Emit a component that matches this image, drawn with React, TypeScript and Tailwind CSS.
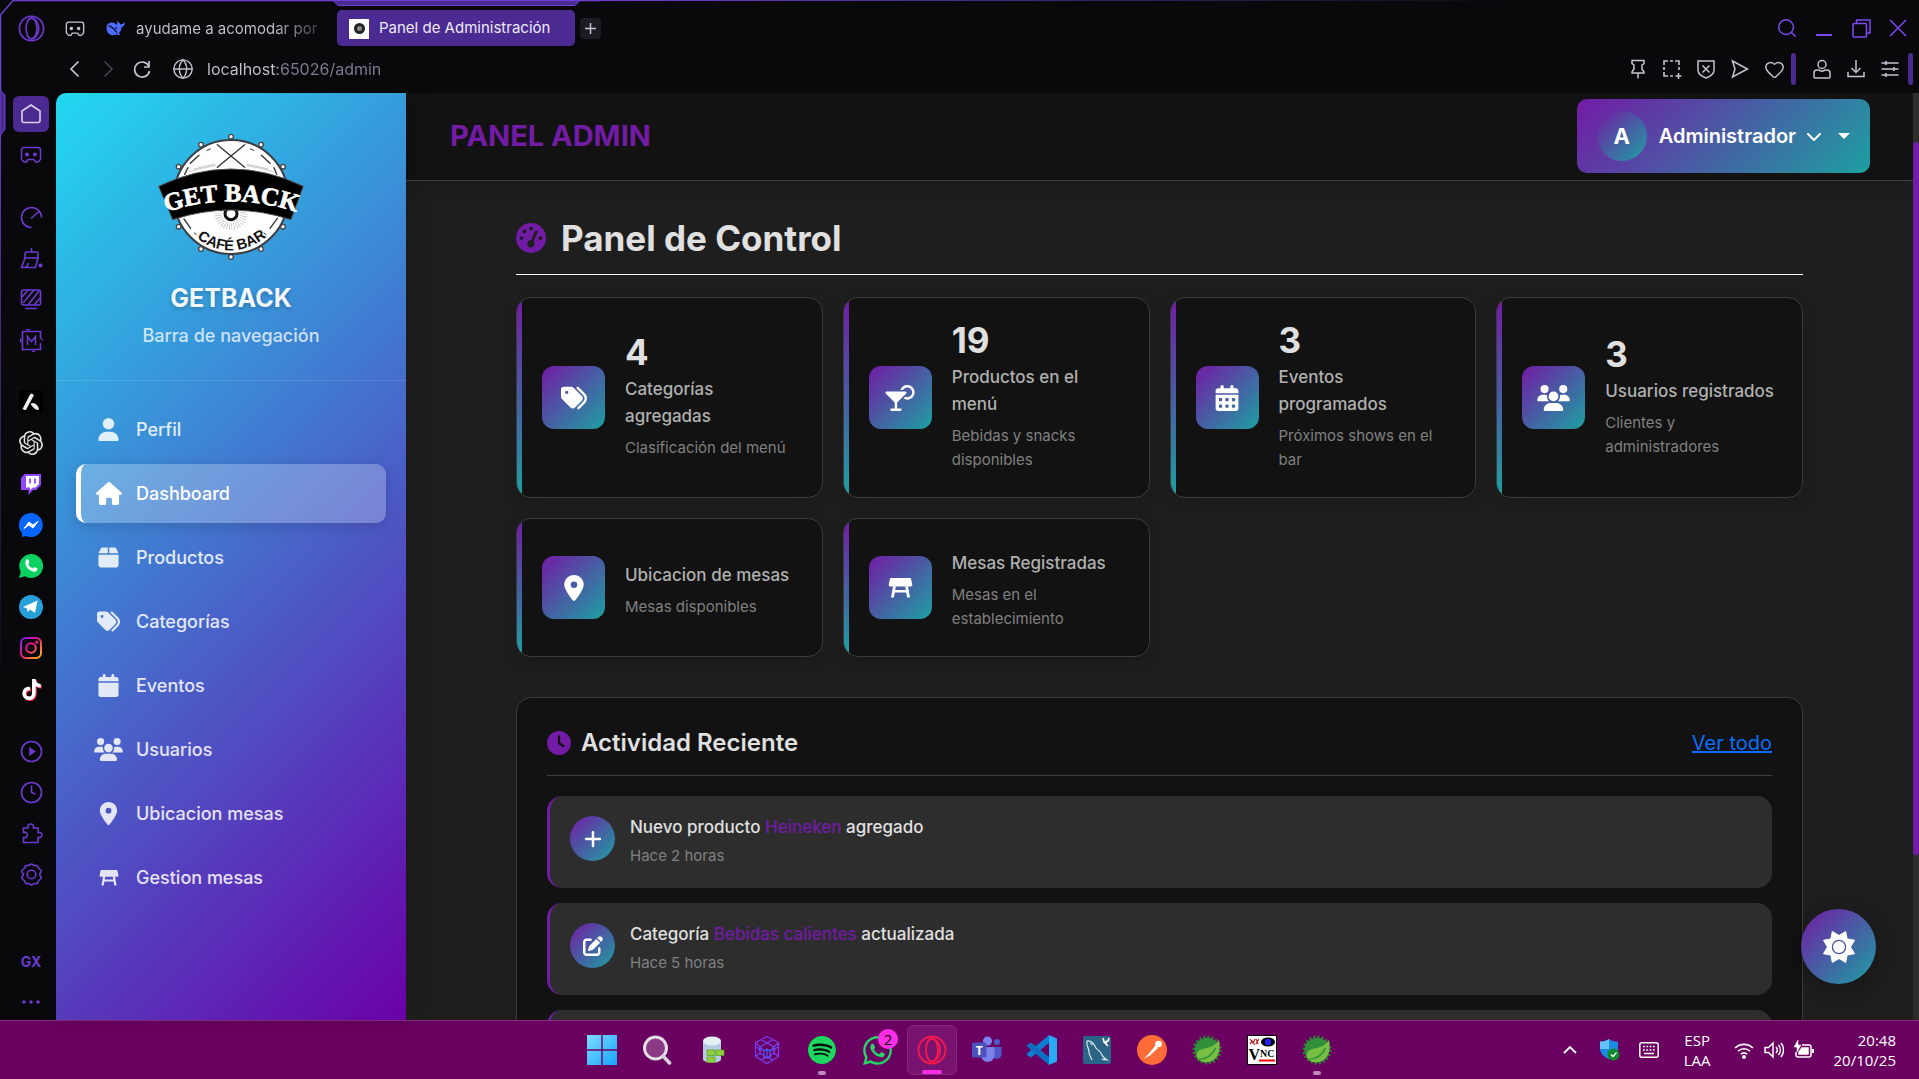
import type { ReactNode } from "react";
import {
  FaBox,
  FaCalendar,
  FaCalendarDays,
  FaChevronDown,
  FaClock,
  FaGaugeHigh,
  FaHouse,
  FaLocationDot,
  FaMartiniGlassCitrus,
  FaPenToSquare,
  FaPlus,
  FaTags,
  FaTiktok,
  FaUser,
  FaUsers,
  FaWhatsapp,
} from "react-icons/fa6";
import { SiOpenai, SiSpotify } from "react-icons/si";
import { Globe, Heart, Search } from "lucide-react";

/* ---------- Drawings ---------- */

function OperaRing({ className }: { className?: string }) {
  return (
    <svg viewBox="0 0 28 28" fill="none" stroke="currentColor" strokeWidth="1.8" className={className}>
      <circle cx="14" cy="14" r="12.6" />
      <ellipse cx="14" cy="14" rx="5.6" ry="10.8" />
      <path d="M14 3.2c3.6.4 7.600 4.600 7.600 10.800S17.600 24.400 14 24.800" />
    </svg>
  );
}

function PicnicTable({ className }: { className?: string }) {
  return (
    <svg viewBox="0 0 20 16" fill="currentColor" className={className}>
      <path d="M2.600 0h14.800c.6 0 1 .3 1.100.8l.9 4.600c.1.8-.4 1.400-1.200 1.400H1.800C1 6.800.5 6.200.6 5.400l.9-4.600C1.600.3 2 0 2.600 0z" />
      <path d="M4 6.500h2.200l-.4 3h8.400l-.4-3H16L17.600 15.500h-2.300l-.7-4H5.400l-.7 4H2.400z" />
    </svg>
  );
}

function Gamepad({ className }: { className?: string }) {
  return (
    <svg viewBox="0 0 22 18" fill="none" stroke="currentColor" strokeWidth="1.500" className={className}>
      <path d="M4 1.500h14a2.500 2.500 0 0 1 2.500 2.500v9.500L18 16h-2.500l-1.500-2.500H8L6.500 16H4l-2.500-2.500V4A2.500 2.500 0 0 1 4 1.500z" />
      <circle cx="7" cy="8.500" r="1.200" fill="currentColor" />
      <circle cx="15" cy="8.500" r="1.200" fill="currentColor" />
    </svg>
  );
}

function Leaf({ className }: { className?: string }) {
  return (
    <svg viewBox="0 0 32 32" className={className}>
      <circle cx="16" cy="16" r="14" fill="none" stroke="#2f7d33" strokeWidth="3" strokeDasharray="2.200 2.200" />
      <circle cx="16" cy="16" r="13.200" fill="#2f8f3a" />
      <path d="M28.500 5c2.500 9 .5 19-8 23C13 31 5.500 28 5 22.500c-.4-5 3.500-7.500 9.500-8.500 6-1 10.500-3 14-9z" fill="#76bf43" />
      <path d="M7 26c8-.5 14.500-4 18-12" fill="none" stroke="#2f8f3a" strokeWidth="1.500" />
    </svg>
  );
}

function Logo() {
  const nubs = [
    [525, 143], [435, 167], [615, 167], [368, 233], [681, 233],
    [368, 413], [681, 413], [435, 480], [615, 480], [525, 504],
  ];
  return (
    <svg viewBox="300 132 450 384" className="h-32 w-[150px]" role="img" aria-label="Get Back Café Bar">
      <defs>
        <path id="banner-line" d="M330 370Q525 304 722 370" />
        <path id="cafe-line" d="M418 444Q525 526 636 440" />
      </defs>
      {nubs.map(([x, y]) => (
        <circle key={`${x}-${y}`} cx={x} cy={y} r="7" fill="#fff" stroke="#444" strokeWidth="4" />
      ))}
      <circle cx="525" cy="324" r="171" fill="#fff" stroke="#3b3f44" strokeWidth="6" />
      <g fill="none" stroke="#333" strokeLinecap="round">
        <path d="M484 167l82 68M566 167l-82 68" strokeWidth="4" />
        <path d="M403 223l26-24M386 256l10-20M616 199l26 24M654 236l8 20M384 390l20 28M664 388l-22 30" strokeWidth="4" />
        <path d="M453 184l10-4M583 180l10 4M415 432l6 5M630 437l-6-5" strokeWidth="3" />
        <path d="M400 248q40-12 78-18M414 240q34-10 62-14M572 230q40 6 78 18M574 226q34 6 62 14" stroke="#aaa" strokeWidth="2" />
      </g>
      <circle cx="525" cy="374" r="38" fill="none" stroke="#bbb" strokeWidth="22" strokeDasharray="2 5" />
      <circle cx="525" cy="374" r="18" fill="#fff" stroke="#111" strokeWidth="9" />
      <path d="M308 292Q525 188 742 292L705 392Q525 334 350 392z" fill="#000" stroke="#555" strokeWidth="3" />
      <text fill="#fff" stroke="#fff" strokeWidth="2" fontSize="76" fontWeight="700" fontFamily="'Liberation Serif',serif" textAnchor="middle">
        <textPath href="#banner-line" startOffset="50%">GET BACK</textPath>
      </text>
      <text fill="#111" fontSize="44" fontWeight="700" fontFamily="'Liberation Sans',sans-serif" textAnchor="middle">
        <textPath href="#cafe-line" startOffset="50%">CAFÉ BAR</textPath>
      </text>
    </svg>
  );
}

function Line({ children, box = 24, className, w = 1.600 }: { children: ReactNode; box?: number; className?: string; w?: number }) {
  return (
    <svg viewBox={`0 0 ${box} ${box}`} fill="none" stroke="currentColor" strokeWidth={w} className={className}>
      {children}
    </svg>
  );
}

/* ---------- Browser chrome ---------- */

function ChromeButton({ label, children }: { label: string; children: ReactNode }) {
  return (
    <button aria-label={label} className="flex h-8 w-[22px] items-center justify-center">
      {children}
    </button>
  );
}

function BrowserTop() {
  return (
    <header className="relative h-[93px] shrink-0 bg-[#09090b] text-[#c4c4d0]">
      <svg viewBox="0 0 600 93" className="pointer-events-none absolute left-0 top-0 h-[93px] w-[600px]" fill="none">
        <path d="M.5 93V15L13 .500H600" stroke="#6d3fd4" strokeWidth="1.500" />
        <path d="M333 .500l5 5H575l5-5z" fill="#4b2a92" stroke="#6d3fd4" />
      </svg>
      <div className="absolute left-[600px] right-0 top-0 h-px bg-linear-to-r from-[#6d3fd4] to-transparent to-70%" />
      <div className="flex h-[47px] items-end pl-[18px] pr-[10px]">
        <button aria-label="Menú de Opera" className="mb-[5px] text-[#6b37cc]">
          <OperaRing className="size-[27px]" />
        </button>
        <button aria-label="GX Corner" className="mb-[9px] ml-5">
          <Gamepad className="h-[18px] w-5" />
        </button>
        <button className="ml-5 flex h-9 w-[218px] items-center gap-[10px] text-left">
          <svg viewBox="0 0 22 20" className="h-[18px] w-[21px] shrink-0 text-[#4d6bfe]" fill="currentColor">
            <path d="M1 9C1 4.500 4.500 2 8.500 3c1.500.3 2.500 1.200 3.600 2.300C13 6 13.200 3 12.500 1.500c2 .6 3.200 1.800 3.800 3.500C18 5 19.800 4 21.500 2.500c0 3-1.300 5-3.800 5.500-.1 3-1.300 5-3 6.800.8.600 1.500 1 2.300 1.400-1.700.7-3.400.4-4.800-.3C6.500 19 1 15.500 1 9z" />
            <path d="M3.500 6.500c4 .5 5.500 3.500 9 7.500" stroke="#09090b" strokeWidth="1.300" fill="none" />
            <circle cx="11.800" cy="9" r="1" fill="#09090b" />
          </svg>
          <span className="bg-linear-to-r from-[#c4c4d0] from-75% to-[#44444c] bg-clip-text text-[15px] whitespace-nowrap text-transparent">
            ayudame a acomodar por
          </span>
        </button>
        <button className="mb-px ml-[14px] flex h-9 w-[238px] items-center gap-[10px] rounded-[5px] bg-[#4b2a92] pt-px pl-3 text-[15px] text-[#eeeaf8]">
          <span className="flex size-5 items-center justify-center bg-white">
            <span className="size-[11px] rounded-full border-3 border-[#222] bg-[#888]" />
          </span>
          Panel de Administración
        </button>
        <button aria-label="Nueva pestaña" className="mb-2 ml-[5px] flex h-[21px] w-[21px] items-center justify-center rounded bg-[#1b1b24]">
          <Line className="size-[15px]" box={15} w={1.500}><path d="M7.500 2v11M2 7.500h11" /></Line>
        </button>
        <div className="mb-[3px] ml-auto flex gap-[15px] text-[#7c4af0]">
          <ChromeButton label="Buscar"><Search className="size-[22px] shrink-0" strokeWidth={1.600} /></ChromeButton>
          <ChromeButton label="Minimizar"><Line className="size-4" box={16} w={2}><path d="M0 15h16" /></Line></ChromeButton>
          <ChromeButton label="Restaurar">
            <Line className="size-[19px] shrink-0" box={19} w={1.500}>
              <rect x="1" y="4.500" width="13.500" height="13.500" rx="1" /><path d="M4.500 4V1H18v13h-3" />
            </Line>
          </ChromeButton>
          <ChromeButton label="Cerrar"><Line className="size-[18px]" box={18} w={1.500}><path d="M1 1l16 16M17 1L1 17" /></Line></ChromeButton>
        </div>
      </div>
      <div className="flex h-11 items-center pl-16">
        <ChromeButton label="Atrás"><Line className="h-[18px] w-[18px]" box={18} w={1.700}><path d="M12.500 1.500L5 9l7.500 7.500" /></Line></ChromeButton>
        <span className="w-[11px]" />
        <ChromeButton label="Adelante"><Line className="h-[18px] w-[18px] text-[#44444c]" box={18}><path d="M5.500 1.500L13 9l-7.500 7.500" /></Line></ChromeButton>
        <span className="w-3" />
        <ChromeButton label="Recargar"><Line className="size-[18px]" box={18} w={1.700}><path d="M16 1v6h-5M16 6.500A7.500 7.500 0 1 0 16.500 11" /></Line></ChromeButton>
        <span className="w-[19px]" />
        <Globe className="size-[22px]" strokeWidth={1.500} />
        <input
          aria-label="Dirección"
          defaultValue="localhost:65026/admin"
          className="ml-[13px] w-[400px] bg-[linear-gradient(90deg,#c4c4d0_70px,#7f7c93_70px)] bg-clip-text text-[16px] text-transparent outline-none"
        />
        <div className="ml-auto flex items-center gap-3 pr-[6px]">
          <ChromeButton label="Anclar"><Line className="size-5 shrink-0" box={20} w={1.500}><path d="M4 1.500h12v3l-2 1.500v4l2 3v1H4v-1l2-3V6L4 4.500zM10 14v5.500" /></Line></ChromeButton>
          <ChromeButton label="Captura">
            <Line className="size-5 shrink-0" box={20} w={1.600}>
              <path d="M2 6V2h4M8 2h3M13 2h4v4M2 8v3M2 13v4h4M8 17h3M17 8v3M16.500 14v6M13.500 17h6" />
            </Line>
          </ChromeButton>
          <ChromeButton label="Bloqueador">
            <Line className="size-5 shrink-0" box={20} w={1.500}><path d="M2 2h16v9c0 4-4 6.500-8 8-4-1.500-8-4-8-8zM6.500 6.500l7 7M13.500 6.500l-7 7" /></Line>
          </ChromeButton>
          <ChromeButton label="Enviar"><Line className="size-5 shrink-0" box={20} w={1.500}><path d="M2.500 2l15 8-15 8 2.500-8z" /></Line></ChromeButton>
          <ChromeButton label="Favoritos"><Heart className="size-[21px] shrink-0" strokeWidth={1.600} /></ChromeButton>
          <span className="-ml-[6px] mr-[3px] h-8 w-[5px] rounded-sm bg-[#4b2a92]" />
          <ChromeButton label="Perfil del navegador">
            <Line className="size-5 shrink-0" box={20} w={1.500}><circle cx="10" cy="5.500" r="4" /><path d="M5 11h2c1 1.500 5 1.500 6 0h2a3 3 0 0 1 3 3v4a1 1 0 0 1-1 1H3a1 1 0 0 1-1-1v-4a3 3 0 0 1 3-3z" /></Line>
          </ChromeButton>
          <ChromeButton label="Descargas"><Line className="size-5 shrink-0" box={20} w={1.500}><path d="M10 1v12M5.500 9l4.500 4.500L14.500 9M2 13v4.500h16V13" /></Line></ChromeButton>
          <ChromeButton label="Configuración rápida">
            <Line className="size-5 shrink-0" box={20} w={1.600}><path d="M1.500 4h17M1.500 10h17M1.500 16h17M6 2v4M14 8v4M6 14v4" /></Line>
          </ChromeButton>
          <span className="-ml-[5px] h-8 w-[5px] rounded-sm bg-[#4b2a92]" />
        </div>
      </div>
    </header>
  );
}

const railGroups: { label: string; icon: ReactNode }[][] = [
  [
    { label: "Inicio", icon: <span className="flex size-9 items-center justify-center rounded-md bg-[#4b2a92] text-[#d8d4e4]"><Line className="size-[22px]" box={22}><path d="M11 2l9 6v9.500a2 2 0 0 1-2 2H4a2 2 0 0 1-2-2V8z" /></Line></span> },
    { label: "GX Corner", icon: <Gamepad className="h-[18px] w-[22px]" /> },
  ],
  [
    { label: "GX Control", icon: <Line className="size-[23px]" box={23}><path d="M11.500 21.500a10 10 0 1 1 10-10M11 12.500l8-7" /></Line> },
    { label: "GX Cleaner", icon: <Line className="size-[23px]" box={23}><path d="M11.500 1v4M5 11V7a2 2 0 0 1 2-2h9a2 2 0 0 1 2 2v4zM5 11L1.500 20.500H15.500L18 11M6 20c1.500-1 2-2 2.500-4" /><circle cx="20.500" cy="18.500" r="1.300" fill="currentColor" /></Line> },
    { label: "Fondos", icon: <Line className="size-[22px]" box={22}><rect x="1.500" y="2" width="19" height="15" rx="2" /><path d="M2 9l6-7M3 15L14 2M8 17L19 3M14 17l6-7M5 20.500h12" /></Line> },
    { label: "GX Mods", icon: <Line className="size-[23px]" box={23}><path d="M20.500 14v6.500h-18v-18h18V10M.500 9.500v4M22.500 9.500v2M6 .500h4M12 22.500h3M7.500 16V7.500l4 5 4-5V16" /></Line> },
  ],
  [
    { label: "Aria", icon: <svg viewBox="0 0 24 24" className="size-6"><rect width="24" height="24" rx="4" fill="#000" /><path d="M3.500 19L11 4.500c.5-1 1.500-1 2.500-.5l1.500 1L7.500 19c-.5 1-1 1.300-2 1zM11.500 14c3-3 8 1 8.500 5.500-2 1.500-5-.500-8.500-5.500z" fill="#eee" /></svg> },
    { label: "ChatGPT", icon: <SiOpenai className="size-6 text-[#e5e5e5]" /> },
    { label: "Twitch", icon: <svg viewBox="0 0 20 21" className="h-[21px] w-5"><path d="M3.500 0H20v11l-5 5h-3l-4.500 5v-5H0V4z" fill="#9146ff" /><path d="M5 2h13v8l-3.500 3.500H12L9 16v-2.500H5z" fill="#fff" /><path d="M9 4.500v5M14 4.500v5" stroke="#9146ff" strokeWidth="1.800" /></svg> },
    { label: "Messenger", icon: <svg viewBox="0 0 24 24" className="size-6"><path d="M12 0a12 12 0 1 1-5 23l-4 1v-4A12 12 0 0 1 12 0z" fill="#0866ff" /><path d="M5 15.500l5-6.500 4 3 5-3.500-5 6.500-4-3z" fill="#fff" stroke="#fff" strokeLinejoin="round" /></svg> },
    { label: "WhatsApp", icon: <svg viewBox="0 0 24 24" className="size-6"><path d="M12 0a12 12 0 1 1-6 22.300L0 24l1.800-6A12 12 0 0 1 12 0z" fill="#09d261" /><path d="M7.500 5.500c1-.8 2-.3 2.500 1.500.6 1.500.3 2-.8 3 1 2.200 2.500 3.500 4.800 4.600 1-1.300 1.500-1.600 3-.9 1.700.8 2 1.500 1 2.800-2 2.300-5.500 1-8.500-1.500S5.300 7.800 7.500 5.500z" fill="#fff" /></svg> },
    { label: "Telegram", icon: <svg viewBox="0 0 24 24" className="size-6"><circle cx="12" cy="12" r="12" fill="#279fd9" /><path d="M4 12l14.500-6.500L16 18l-5-3.500L8.500 17 8 13.500z" fill="#fff" /></svg> },
    { label: "Instagram", icon: (
      <svg viewBox="0 0 22 22" className="size-[22px]" fill="none" stroke="url(#insta)" strokeWidth="2">
        <defs><linearGradient id="insta" gradientUnits="userSpaceOnUse" x1="0" y1="0" x2="22" y2="22"><stop stopColor="#6a20ff" /><stop offset=".45" stopColor="#f0128a" /><stop offset="1" stopColor="#ffd400" /></linearGradient></defs>
        <rect x="1" y="1" width="20" height="20" rx="5" /><circle cx="11" cy="11" r="4.800" /><circle cx="16.800" cy="5.200" r=".6" />
      </svg>
    ) },
    { label: "TikTok", icon: <FaTiktok className="size-[21px] text-white drop-shadow-[1px_1px_0_#fe2c55]" /> },
  ],
  [
    { label: "Reproductor", icon: <Line className="size-[23px]" box={23}><circle cx="11.500" cy="11.500" r="10" /><path d="M10 8.500l4.500 3-4.500 3z" fill="currentColor" /></Line> },
    { label: "Historial", icon: <Line className="size-[23px]" box={23}><circle cx="11.500" cy="11.500" r="10" /><path d="M11.500 4.500v7l4 1.500" /></Line> },
    { label: "Extensiones", icon: <Line className="size-[23px]" box={23}><path d="M3.500 6h4.500c-.6-2.500.6-4 2.700-4s3.300 1.500 2.700 4h4.600v4.500c2.500-.6 4 .6 4 2.500s-1.500 3.100-4 2.500V20.500H3.500v-5c2.600.6 3.800-.7 3.800-2.500S6.100 10 3.500 10.500z" /></Line> },
    { label: "Ajustes", icon: <Line className="size-[23px]" box={23}><path d="M8 2.500c1.500.5 2-1.500 3.500-1.500s2 2 3.500 1.500 3 .5 3.200 2.200c.2 1.500 2.500 1.300 3 3 .4 1.500-1.500 2.300-1.500 3.800s1.900 2.300 1.500 3.800c-.5 1.700-2.800 1.500-3 3-.2 1.700-1.700 2.700-3.200 2.200S13 22 11.500 22s-2-2-3.500-1.500-3-.5-3.200-2.200c-.2-1.500-2.500-1.300-3-3-.4-1.500 1.500-2.300 1.500-3.800S1.400 9.200 1.800 7.700c.5-1.700 2.800-1.500 3-3C5 3 6.500 2 8 2.500z" /><circle cx="11.500" cy="11.500" r="4.300" /></Line> },
  ],
  [
    { label: "GX", icon: <span className="text-[14px] font-bold">GX</span> },
    { label: "Más", icon: <svg viewBox="0 0 18 4" className="h-1 w-[18px]" fill="currentColor"><circle cx="2" cy="2" r="1.800" /><circle cx="9" cy="2" r="1.800" /><circle cx="16" cy="2" r="1.800" /></svg> },
  ],
];

function BrowserRail() {
  return (
    <aside className="relative flex w-14 shrink-0 flex-col gap-[26px] bg-[#09090b] pt-[3px] pl-[6px] text-[#6b3bd0]">
      <div className="absolute left-0 top-0 h-[600px] w-px bg-linear-to-b from-[#6d3fd4] to-transparent" />
      <svg viewBox="0 0 7 50" className="absolute left-0 -top-[3px] h-[50px] w-[7px]">
        <path d="M0 0l5 5v34l-5 7z" fill="#4b2a92" stroke="#6d3fd4" />
      </svg>
      {railGroups.map((group, i) => (
        <div key={i} className="flex flex-col items-center gap-[5px] last:mt-auto">
          {group.map((item) => (
            <button key={item.label} aria-label={item.label} className="flex size-9 items-center justify-center">
              {item.icon}
            </button>
          ))}
        </div>
      ))}
    </aside>
  );
}

/* ---------- Admin panel ---------- */

const navItems = [
  { label: "Perfil", icon: <FaUser /> },
  { label: "Dashboard", icon: <FaHouse className="w-[26px]" />, active: true },
  { label: "Productos", icon: <FaBox /> },
  { label: "Categorías", icon: <FaTags /> },
  { label: "Eventos", icon: <FaCalendar /> },
  { label: "Usuarios", icon: <FaUsers className="w-[29px]" /> },
  { label: "Ubicacion mesas", icon: <FaLocationDot /> },
  { label: "Gestion mesas", icon: <PicnicTable className="h-4 w-5" /> },
];

function Sidebar() {
  return (
    <aside className="z-10 flex w-[350px] shrink-0 flex-col overflow-hidden rounded-tl-[10px] bg-[linear-gradient(135deg,#22d8f0,#6a00a8)] shadow-[4px_0_20px_rgba(0,0,0,0.15)]">
      <div className="flex flex-col items-center border-b border-white/10 pt-10 pb-[31px] text-center">
        <Logo />
        <h2 className="mt-5 text-[25px] leading-[34px] font-bold text-white/95 [text-shadow:0_2px_4px_rgba(0,0,0,0.2)]">GETBACK</h2>
        <p className="mt-[7px] text-[18px] leading-[27px] font-medium text-white/75">Barra de navegación</p>
      </div>
      <nav className="flex flex-col gap-[5px] px-5 pt-[19px]">
        {navItems.map((item) => (
          <a
            key={item.label}
            href="#"
            className={
              item.active
                ? "flex h-[59px] items-center rounded-[10px] border-l-5 border-white bg-white/25 pl-[15px] text-white shadow-[0_4px_15px_rgba(0,0,0,0.15)]"
                : "flex h-[59px] items-center rounded-[10px] pl-5 text-white/85"
            }
          >
            <span className="flex w-[25px] shrink-0 justify-center text-[23px] [&>svg]:shrink-0">{item.icon}</span>
            <span className="ml-[15px] text-[18px] font-medium">{item.label}</span>
          </a>
        ))}
      </nav>
    </aside>
  );
}

const stats = [
  { value: "4", label: "Categorías agregadas", note: "Clasificación del menú", icon: <FaTags className="w-7" /> },
  { value: "19", label: "Productos en el menú", note: "Bebidas y snacks disponibles", icon: <FaMartiniGlassCitrus className="w-[30px]" /> },
  { value: "3", label: "Eventos programados", note: "Próximos shows en el bar", icon: <FaCalendarDays /> },
  { value: "3", label: "Usuarios registrados", note: "Clientes y administradores", icon: <FaUsers className="w-[33px]" /> },
  { value: "", label: "Ubicacion de mesas", note: "Mesas disponibles", icon: <FaLocationDot /> },
  { value: "", label: "Mesas Registradas", note: "Mesas en el establecimiento", icon: <PicnicTable className="h-5 w-[25px]" /> },
];

function StatCard({ value, label, note, icon }: (typeof stats)[number]) {
  return (
    <article className="relative flex items-center gap-5 overflow-hidden rounded-[15px] border border-[#3c3c3c] bg-[#121212] p-[25px] shadow-[0_4px_15px_rgba(0,0,0,0.15)]">
      <div className="absolute inset-y-0 left-0 w-[5px] bg-[linear-gradient(180deg,#721ba5,#1da0a2)]" />
      <div className="flex size-[63px] shrink-0 items-center justify-center rounded-xl bg-[linear-gradient(135deg,#721ba5,#1da0a2)] text-[26px] text-white">
        {icon}
      </div>
      <div className="min-w-0">
        {value && <h3 className="text-[35px] leading-[35px] font-bold text-[#e0e0e0]">{value}</h3>}
        <p className="mt-[6px] text-[17px] leading-[27px] font-medium text-[#b0b0b0]">{label}</p>
        <p className="mt-[6px] text-[15px] leading-6 text-[#808080]">{note}</p>
      </div>
    </article>
  );
}

const activity = [
  { before: "Nuevo producto", subject: "Heineken", after: "agregado", time: "Hace 2 horas", icon: <FaPlus /> },
  { before: "Categoría", subject: "Bebidas calientes", after: "actualizada", time: "Hace 5 horas", icon: <FaPenToSquare /> },
];

const activityRow = "flex min-h-[92px] gap-[15px] rounded-[15px] border-l-3 border-[#721ba5] bg-[#2d2d2d] p-5";

function AdminPage() {
  return (
    <main className="relative flex min-w-0 flex-1 flex-col overflow-hidden bg-[#1e1e1e]">
      <header className="flex h-22 shrink-0 items-center justify-between border-b border-[#404040] bg-[#121212] pr-[43px] pb-px pl-11 shadow-[0_2px_15px_rgba(0,0,0,0.2)]">
        <h1 className="text-[29px] font-bold text-[#721ba5]">PANEL ADMIN</h1>
        <button className="flex h-[74px] items-center rounded-[10px] bg-[linear-gradient(135deg,#721ba5,#1da0a2)] px-5 text-white">
          <span className="flex size-[50px] items-center justify-center rounded-full bg-[linear-gradient(135deg,#721ba5,#1da0a2)] text-[22px] font-bold">A</span>
          <span className="ml-3 text-[20px] font-semibold">Administrador</span>
          <FaChevronDown className="ml-[10px] size-4" />
          <svg viewBox="0 0 12 6" className="ml-4 h-[6px] w-3" fill="currentColor"><path d="M0 0h12L6 6z" /></svg>
        </button>
      </header>
      <div className="px-[110px] pt-[35px]">
        <h2 className="flex items-center gap-[15px] border-b border-white pb-[14px] text-[35px] leading-11 font-bold text-[#e0e0e0]">
          <FaGaugeHigh className="size-[30px] text-[#721ba5]" />
          Panel de Control
        </h2>
        <section className="mt-[22px] grid grid-cols-4 gap-5">
          {stats.map((s) => (
            <StatCard key={s.label} {...s} />
          ))}
        </section>
        <section className="mt-10 rounded-[15px] border border-[#3c3c3c] bg-[#121212] p-[30px]">
          <div className="flex items-center justify-between border-b border-[#3c3c3c] pb-[17px]">
            <h3 className="flex items-center gap-[10px] text-[24px] leading-[30px] font-semibold text-[#e0e0e0]">
              <FaClock className="size-6 text-[#721ba5]" />
              Actividad Reciente
            </h3>
            <a href="#" className="text-[20px] leading-[30px] text-[#0d6efd] underline">Ver todo</a>
          </div>
          <ul className="mt-5 flex flex-col gap-[15px]">
            {activity.map((a) => (
              <li key={a.subject} className={activityRow}>
                <span className="flex size-[45px] shrink-0 items-center justify-center rounded-full bg-[linear-gradient(135deg,#721ba5,#1da0a2)] text-[20px] text-white">
                  {a.icon}
                </span>
                <div>
                  <p className="text-[17px] leading-[22px] font-medium text-[#e0e0e0]">
                    {a.before} <strong className="font-medium text-[#721ba5]">{a.subject}</strong> {a.after}
                  </p>
                  <p className="mt-[6px] text-[15px] leading-6 text-[#808080]">{a.time}</p>
                </div>
              </li>
            ))}
            <li className={activityRow} />
          </ul>
        </section>
      </div>
      <button
        aria-label="Cambiar tema"
        className="absolute right-[37px] bottom-9 flex size-[75px] items-center justify-center rounded-full bg-[linear-gradient(135deg,#721ba5,#1da0a2)] text-white shadow-[0_5px_20px_rgba(0,0,0,0.3)]"
      >
        <svg viewBox="-16 -16 32 32" className="size-8">
          <path d="M-6.700-15.500L0-11.500 6.700-15.500 8.100-8.100 15.500-6.700 11.500 0 15.500 6.700 8.100 8.100 6.700 15.500 0 11.500-6.700 15.500-8.100 8.100-15.500 6.700-11.500 0-15.500-6.700-8.100-8.100z" fill="white" stroke="white" strokeLinejoin="round" />
          <circle r="6.600" fill="none" stroke="#4b55a5" strokeWidth="1.300" />
        </svg>
      </button>
    </main>
  );
}

/* ---------- Taskbar ---------- */

const apps: { label: string; icon: ReactNode; mark?: "dot" | "active"; badge?: string }[] = [
  { label: "Inicio de Windows", icon: (
    <svg viewBox="0 0 30 30" className="size-[30px]">
      <defs><linearGradient id="win" x1="0" y1="0" x2="1" y2="1"><stop stopColor="#7fdcff" /><stop offset="1" stopColor="#15a4fb" /></linearGradient></defs>
      <path d="M0 0h14.300v14.300H0zM15.700 0H30v14.300H15.700zM0 15.700h14.300V30H0zM15.700 15.700H30V30H15.700z" fill="url(#win)" />
    </svg>
  ) },
  { label: "Buscar en Windows", icon: <svg viewBox="0 0 30 30" className="size-[30px]"><circle cx="13.500" cy="13" r="11" fill="#8a3a86" stroke="#e4e0e6" strokeWidth="3" /><path d="M21 21l6.500 7" stroke="#d8d4da" strokeWidth="3.500" strokeLinecap="round" /></svg> },
  { label: "Base de datos", icon: (
    <svg viewBox="0 0 30 30" className="size-[30px]">
      <path d="M6 6v18c0 5 18 5 18 0V6z" fill="#b4cde0" /><ellipse cx="15" cy="6" rx="9" ry="4.500" fill="#e6f0f7" />
      <path d="M10 15h8v5.500h-8zM19 15h8v5.500h-8zM10 22h8v5.500h-8z" fill="#8fd03f" stroke="#5a9a20" strokeWidth=".7" />
    </svg>
  ) },
  { label: "Kubernetes", icon: (
    <svg viewBox="0 0 30 30" className="size-[30px]" fill="none" stroke="#7a3ff0" strokeWidth="1.200">
      <path d="M15 1.500l11.500 6v14L15 28.500l-11.500-7v-14zM3.500 7.500L8 12l7-4 7 4 4.500-4.500M3.500 21.500L8 18l7 5 7-5 4.500 3.500M3.500 12L8 14v5M26.500 12L22 14v5M9 4.500l6 3.500 6-3.500M9 25l6-3 6 3" />
      <path d="M8 12l4 4v8M22 12l-4 4v8M12 16l3-2 3 2M15 14v8" stroke="#4a5cf5" />
      <circle cx="8" cy="15" r="1" /><circle cx="22" cy="15" r="1" />
    </svg>
  ) },
  { label: "Spotify", mark: "dot", icon: <span className="flex size-7 items-center justify-center rounded-full bg-[#0b0b0b]"><SiSpotify className="size-7 text-[#1ed760]" /></span> },
  { label: "WhatsApp Desktop", badge: "2", icon: <FaWhatsapp className="size-[33px] text-[#25d366]" /> },
  { label: "Opera GX", mark: "active", icon: <OperaRing className="size-[30px] text-[#f0184c]" /> },
  { label: "Teams", icon: (
    <svg viewBox="0 0 30 30" className="size-[30px]">
      <circle cx="15.500" cy="6" r="4.500" fill="#7b83eb" /><circle cx="25" cy="7" r="3" fill="#5059c9" />
      <path d="M20 12h9.500v7a5 5 0 0 1-9.500 2z" fill="#5059c9" /><path d="M9 12h13.500v9a6.800 6.800 0 0 1-13.500 0z" fill="#7b83eb" />
      <rect y="7.500" width="14.500" height="15" rx="1.500" fill="#4b53bc" /><text x="7.200" y="19.500" textAnchor="middle" fontSize="12" fontWeight="700" fill="#fff">T</text>
    </svg>
  ) },
  { label: "Visual Studio Code", icon: (
    <svg viewBox="0 0 30 30" className="size-[30px]">
      <path d="M22 0v8L4 22.500 0 20v-1.500z" fill="#0a7fd0" /><path d="M0 11.500V10l4-2.500L22 22v8z" fill="#0a6fc0" /><path d="M22 0l8 3.500v23L22 30z" fill="#2aa9f5" />
    </svg>
  ) },
  { label: "MySQL Workbench", icon: (
    <svg viewBox="0 0 30 30" className="size-[30px]">
      <rect x="1" y="1" width="28" height="28" rx="2" fill="#2a6486" />
      <path d="M10 25c-1-3-3-5-3-8 0-4-3-7-2-11 4-1 7 3 9 7 2 3 5 3 6 7 .5 2 3 3 5 5-2-.5-4 0-5-1M8 8.500c1 0 1.500.5 2 1.500" fill="none" stroke="#dde9f0" strokeWidth="1.200" />
      <path d="M21 3l1 4 4 4M22 7l4-1 1-3M22 7l3 1" fill="none" stroke="#fff" strokeWidth="1.600" />
    </svg>
  ) },
  { label: "Postman", icon: <svg viewBox="0 0 30 30" className="size-[30px]"><circle cx="15" cy="15" r="15" fill="#ff6c37" /><path d="M6.500 24l5-5 7-8.500 2.500 2.500-8 7.500z" fill="#fff" /><circle cx="21.500" cy="9" r="3.300" fill="#fff" /></svg> },
  { label: "Spring Tools", icon: <Leaf className="size-[30px]" /> },
  { label: "VNC", icon: (
    <svg viewBox="0 0 30 30" className="size-[30px]">
      <rect x=".5" y=".5" width="29" height="29" fill="#fff" stroke="#000" />
      <path d="M3 4l3 4 2-4M3 9l2-3 3 4M9 4l2 5M12 4l-3 5" stroke="#b22" strokeWidth="1.200" fill="none" /><ellipse cx="21" cy="7" rx="7" ry="4.500" fill="#000" /><circle cx="21" cy="7" r="3.200" fill="#22f" />
      <text x="1.500" y="25" fontSize="16" fontWeight="700" fontFamily="'Liberation Serif',serif">V</text>
      <text x="13" y="22" fontSize="10" fontWeight="700" fontFamily="'Liberation Serif',serif">NC</text>
      <path d="M12 25.500h16" stroke="#f00" strokeWidth="2" />
    </svg>
  ) },
  { label: "Spring Boot", mark: "dot", icon: <Leaf className="size-[30px]" /> },
];

function Taskbar() {
  return (
    <footer className="grid h-[59px] shrink-0 grid-cols-[1fr_auto_1fr] items-center border-t border-[#853080] bg-[#6a005f] font-['Open_Sans',sans-serif] text-[15px] leading-5 text-white">
      <div className="col-start-2 flex gap-[5px]">
        {apps.map((app) => (
          <button
            key={app.label}
            aria-label={app.label}
            className={
              app.mark === "active"
                ? "relative flex size-[50px] items-center justify-center rounded-md border border-[#85287b] bg-[#791370]"
                : "relative flex size-[50px] items-center justify-center"
            }
          >
            {app.icon}
            {app.badge && (
              <span className="absolute top-1 right-1 flex size-5 items-center justify-center rounded-full bg-[#ff2de6] text-[15px] text-black">{app.badge}</span>
            )}
            {app.mark === "dot" && <span className="absolute bottom-0 h-1 w-2 rounded-full bg-[#c08abb]" />}
            {app.mark === "active" && <span className="absolute bottom-0 h-1 w-5 rounded-full bg-[#ff2de6]" />}
          </button>
        ))}
      </div>
      <div className="flex items-center justify-end pr-[23px]">
        <Line className="w-[14px]" box={14} w={1.800}><path d="M1 10l6-6 6 6" /></Line>
        <svg viewBox="0 0 22 22" className="ml-[22px] size-[22px]">
          <path d="M10 0c2.500 2 5.500 2.500 9 2.500v7c0 5-4 8.500-9 10.500C5 18 1 14.500 1 9.500v-7C4.500 2.500 7.500 2 10 0z" fill="#1a8be0" />
          <path d="M10 0v10H1V2.500C4.500 2.500 7.500 2 10 0z" fill="#63c5fa" />
          <circle cx="14.500" cy="15.500" r="6" fill="#0f8a2c" /><path d="M12 15.500l2 2 3.500-4" stroke="#fff" strokeWidth="1.300" fill="none" />
        </svg>
        <svg viewBox="0 0 20 16" className="ml-[18px] h-4 w-5" fill="none" stroke="white" strokeWidth="1.500">
          <rect x=".8" y=".8" width="18.400" height="14.400" rx="2" /><path d="M4 4.500h12M4 8h12" strokeDasharray="1.800 1.500" /><path d="M5 11.500h10" />
        </svg>
        <div className="ml-[25px] text-center">
          <p>ESP</p>
          <p>LAA</p>
        </div>
        <Line className="ml-[23px] size-5" box={20} w={1.600}><path d="M1 8a13 13 0 0 1 18 0M4 11.200a8.500 8.500 0 0 1 12 0M6.800 14.200a4.500 4.500 0 0 1 6.400 0" /><circle cx="10" cy="17" r="1.200" fill="white" /></Line>
        <Line className="ml-[10px] size-5" box={20} w={1.500}><path d="M1 7.500h3.500L9 3v14l-4.500-4.500H1zM12 7a4.500 4.500 0 0 1 0 6M14.500 5a8 8 0 0 1 0 10M17 3a11 11 0 0 1 0 14" /></Line>
        <Line className="ml-[10px] size-5" box={20} w={1.500}><path d="M8 5h7a2 2 0 0 1 2 2v8a2 2 0 0 1-2 2H4a2 2 0 0 1-2-2v-3" /><path d="M8 8h6v6H5v-2z" fill="white" /><path d="M19 9v4" strokeWidth="2" /><path d="M4 0L0 7h3v5l4-7H4z" fill="white" strokeWidth=".5" /></Line>
        <div className="ml-5 text-right">
          <p>20:48</p>
          <p>20/10/25</p>
        </div>
      </div>
    </footer>
  );
}

export default function App() {
  return (
    <div className="flex h-screen flex-col overflow-hidden bg-[#09090b] font-['Inter',sans-serif]">
      <BrowserTop />
      <div className="flex min-h-0 flex-1">
        <BrowserRail />
        <Sidebar />
        <AdminPage />
        <div className="w-[6px] shrink-0 bg-[#2d2d2d] pt-[49px]">
          <div className="h-[713px] rounded-[3px] bg-[#721ba5]" />
        </div>
      </div>
      <Taskbar />
    </div>
  );
}
